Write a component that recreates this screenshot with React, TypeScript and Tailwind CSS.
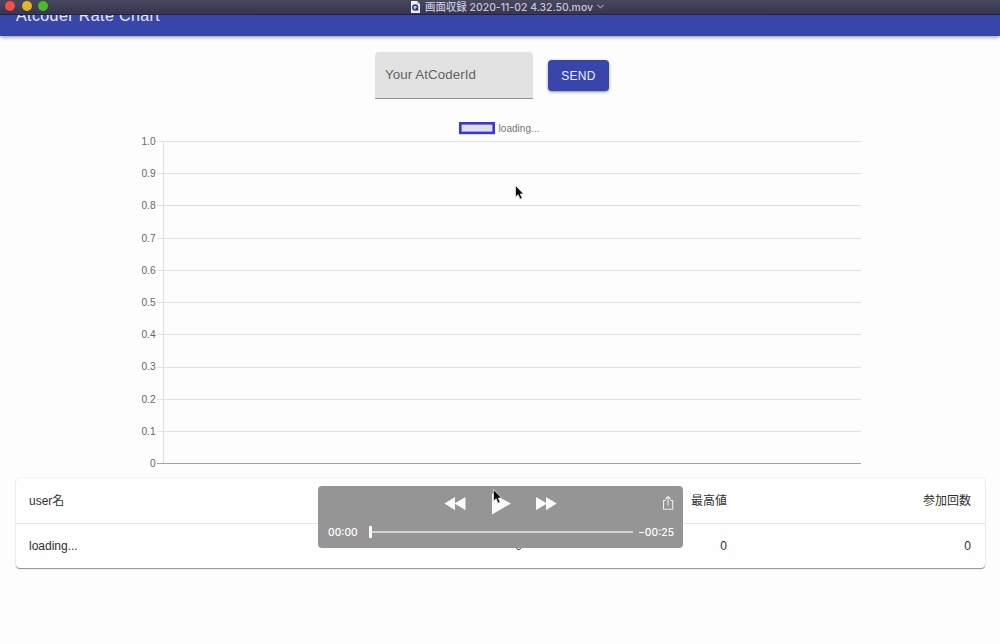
import React from "react";

const ticks = ["1.0", "0.9", "0.8", "0.7", "0.6", "0.5", "0.4", "0.3", "0.2", "0.1", "0"];

function Pointer({ className }: { className: string }) {
  return (
    <svg className={className} width="11" height="17" viewBox="0 0 11 17">
      <path
        d="M1.5 1.5V13L4.2 10.7L6 15.2L8.2 14.3L6.3 10H9.6Z"
        fill="#0b0b0b"
        stroke="#f5f5f5"
        strokeWidth="0.7"
      />
    </svg>
  );
}

function TitleBar() {
  return (
    <div className="absolute inset-x-0 top-0 z-10 flex h-[15px] items-start border-b border-[#252438] bg-linear-to-b from-[#47465f] to-[#37364e]">
      <div className="flex flex-1 gap-[6.5px] pt-[1px] pl-[5px]">
        <span className="size-[10px] rounded-full bg-[#fb4a4c]" />
        <span className="size-[10px] rounded-full bg-[#e3b32c]" />
        <span className="size-[10px] rounded-full bg-[#4bbb2c]" />
      </div>
      <div className="flex h-[13px] items-center gap-[5px] pl-[9px] font-['Inter','Noto_Sans_CJK_JP',sans-serif] text-[11px] leading-[13px] text-[#c6c4dc]">
        <svg width="9" height="12" viewBox="0 0 9 12">
          <path d="M0 0H6L9 3V12H0Z" fill="#eeeef4" />
          <path d="M6 0L9 3H6Z" fill="#b9b9c8" />
          <circle cx="4.2" cy="6.5" r="2.4" fill="#b8d1cb" stroke="#293a8c" strokeWidth="1.5" />
          <path d="M5 7L7.3 9.5" stroke="#263064" strokeWidth="1.3" />
        </svg>
        <svg width="168" height="13" className="overflow-visible">
          <text x="0" y="10.5" textLength="168" lengthAdjust="spacingAndGlyphs" fill="currentColor" className="font-medium">
            画面収録 2020-11-02 4.32.50.mov
          </text>
        </svg>
        <svg width="7" height="5" viewBox="0 0 7 5" className="-ml-px">
          <path d="M.5 1L3.5 3.7L6.5 1" fill="none" stroke="#9896b2" strokeWidth="1.1" />
        </svg>
      </div>
      <div className="flex-1" />
    </div>
  );
}

function Chart() {
  return (
    <svg width="724" height="358" viewBox="0 0 724 358" className="ml-[138px]">
      <rect x="322.3" y="7.3" width="33.4" height="9.6" fill="#dfdee7" stroke="#3936dc" strokeWidth="2.6" />
      <text x="360.5" y="15.5" fontSize="10" fill="#747474" textLength="41">
        loading...
      </text>
      {ticks.map((tick, i) => {
        const y = 25.5 + i * 32.22;
        const last = i === ticks.length - 1;
        const line = Math.floor(y) + 0.5;
        return (
          <g key={tick}>
            <path d={`M19 ${line}H723`} stroke={last ? "#a2a2a2" : tick === "0.8" ? "#dcdcec" : "#e2e2e2"} />
            <text x="17.6" y={y + 3.4} textAnchor="end" fontSize="10.2" fill="#666666">
              {tick}
            </text>
          </g>
        );
      })}
      <path d="M25.5 25V347" stroke="#dedee6" />
    </svg>
  );
}

function Player() {
  return (
    <div className="absolute top-[486px] left-[318px] z-10 flex h-[62px] w-[365px] flex-col rounded-[4px] bg-[#969595] text-white">
      <div className="relative h-[36px]">
        <svg width="365" height="36" viewBox="0 0 365 36" fill="#fafafa">
          <path d="M126.5 17.5L137 11V24.2Z M136.5 17.5L147.5 11V24.2Z" />
          <path d="M174 7.5L193 17.5L174 28.5Z" />
          <path d="M218 11L229 17.5L218 24.2Z M228 11L238.8 17.5L228 24.2Z" />
          <path
            d="M348 14.5H345.5V23.2H354.7V14.5H352.2M350.1 19.5V10.8M347.6 13L350.1 10.5L352.6 13"
            fill="none"
            stroke="#ededed"
            strokeWidth="1.1"
          />
        </svg>
        <Pointer className="absolute top-[2px] left-[174px]" />
      </div>
      <div className="flex h-[20px] items-center px-[10px] font-['Inter','Liberation_Sans',sans-serif] text-[10.3px] leading-[20px] font-medium">
        <span className="w-[41px] shrink-0">00:00</span>
        <span className="h-[12px] w-[3px] shrink-0 bg-[#fafafa]" />
        <span className="h-[2px] w-[261px] shrink-0 bg-[#d4d4d4]" />
        <span className="ml-[5px] whitespace-nowrap">−00:25</span>
      </div>
    </div>
  );
}

export default function App() {
  return (
    <div className="relative flex h-[644px] w-[1000px] flex-col overflow-hidden bg-[#fdfdfd] font-['Liberation_Sans','Noto_Sans_CJK_JP',sans-serif]">
      <TitleBar />
      <header className="h-[36px] shrink-0 bg-[#3846ab] pt-[6px] pl-[16px] shadow-[0_1px_4px_rgba(0,0,0,0.45)]">
        <h1 className="text-[16px] leading-[20px] tracking-[0.4px] text-[#e5e7f8]">Atcoder Rate Chart</h1>
      </header>
      <form className="flex shrink-0 items-start pt-[16px] pl-[375px]" onSubmit={(e) => e.preventDefault()}>
        <label className="flex h-[47px] w-[158px] items-center rounded-t-[4px] border-b border-[#929090] bg-[#e3e2e2] pl-[10px] text-[13.3px] tracking-[0.1px] text-[#626262]">
          Your AtCoderId
        </label>
        <button className="mt-[8px] ml-[15px] h-[31px] w-[61px] rounded-[4px] bg-[#3846ab] text-[12px] tracking-[0.3px] text-[#edeefb] shadow-[0_1px_3px_rgba(0,0,0,0.45)]">
          SEND
        </button>
      </form>
      <main className="shrink-0 pt-[17px]">
        <Chart />
        <section className="mx-[16px] mt-[4px] h-[90px] w-[969px] rounded-[4px] bg-[#fefefe] text-[12px] text-[#303030] shadow-[0_1px_1px_rgba(0,0,0,0.42),0_0_2px_rgba(0,0,0,0.13)]">
          <div className="grid h-[46px] grid-cols-[300px_193px_205px_244px] items-center border-b border-[#e4e4e4] px-[13px]">
            <span>user名</span>
            <span className="text-right">現在値</span>
            <span className="text-right">最高値</span>
            <span className="text-right">参加回数</span>
          </div>
          <div className="grid h-[44px] grid-cols-[300px_193px_205px_244px] items-center px-[13px]">
            <span>loading...</span>
            <span className="text-right">0</span>
            <span className="text-right">0</span>
            <span className="text-right">0</span>
          </div>
        </section>
      </main>
      <Pointer className="absolute top-[184px] left-[514px] z-10" />
      <Player />
    </div>
  );
}
